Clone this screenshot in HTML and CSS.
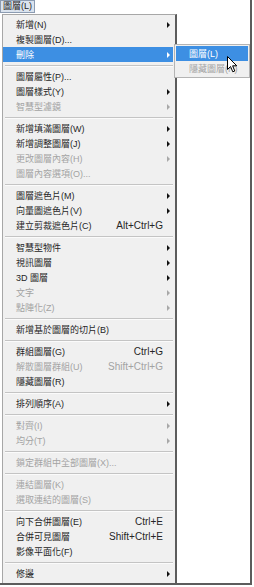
FILE: index.html
```html
<!DOCTYPE html>
<html lang="zh-Hant">
<head>
    <meta charset="UTF-8">
    <meta name="viewport" content="width=device-width, initial-scale=1.0">
    <title>圖層選單</title>
    <link rel="stylesheet" href="styles.css">
</head>
<body>
    <div class="frame">
        <div class="menubar">
            <span class="barItem">圖層(L)</span>
        </div>
        <div class="menu">
            <div class="item sub"><span class="lbl">新增(N)</span><span class="key"></span><span class="arr"></span></div>
            <div class="item"><span class="lbl">複製圖層(D)...</span></div>
            <div class="item sub hot"><span class="lbl">刪除</span><span class="key"></span><span class="arr"></span></div>
            <div class="sep"></div>
            <div class="item"><span class="lbl">圖層屬性(P)...</span></div>
            <div class="item sub"><span class="lbl">圖層樣式(Y)</span><span class="key"></span><span class="arr"></span></div>
            <div class="item sub off"><span class="lbl">智慧型濾鏡</span><span class="key"></span><span class="arr"></span></div>
            <div class="sep"></div>
            <div class="item sub"><span class="lbl">新增填滿圖層(W)</span><span class="key"></span><span class="arr"></span></div>
            <div class="item sub"><span class="lbl">新增調整圖層(J)</span><span class="key"></span><span class="arr"></span></div>
            <div class="item sub off"><span class="lbl">更改圖層內容(H)</span><span class="key"></span><span class="arr"></span></div>
            <div class="item off"><span class="lbl">圖層內容選項(O)...</span></div>
            <div class="sep"></div>
            <div class="item sub"><span class="lbl">圖層遮色片(M)</span><span class="key"></span><span class="arr"></span></div>
            <div class="item sub"><span class="lbl">向量圖遮色片(V)</span><span class="key"></span><span class="arr"></span></div>
            <div class="item"><span class="lbl">建立剪裁遮色片(C)</span><span class="key">Alt+Ctrl+G</span></div>
            <div class="sep"></div>
            <div class="item sub"><span class="lbl">智慧型物件</span><span class="key"></span><span class="arr"></span></div>
            <div class="item sub"><span class="lbl">視訊圖層</span><span class="key"></span><span class="arr"></span></div>
            <div class="item sub"><span class="lbl">3D 圖層</span><span class="key"></span><span class="arr"></span></div>
            <div class="item sub off"><span class="lbl">文字</span><span class="key"></span><span class="arr"></span></div>
            <div class="item sub off"><span class="lbl">點陣化(Z)</span><span class="key"></span><span class="arr"></span></div>
            <div class="sep"></div>
            <div class="item"><span class="lbl">新增基於圖層的切片(B)</span></div>
            <div class="sep"></div>
            <div class="item"><span class="lbl">群組圖層(G)</span><span class="key">Ctrl+G</span></div>
            <div class="item off"><span class="lbl">解散圖層群組(U)</span><span class="key">Shift+Ctrl+G</span></div>
            <div class="item"><span class="lbl">隱藏圖層(R)</span></div>
            <div class="sep"></div>
            <div class="item sub"><span class="lbl">排列順序(A)</span><span class="key"></span><span class="arr"></span></div>
            <div class="sep"></div>
            <div class="item sub off"><span class="lbl">對齊(I)</span><span class="key"></span><span class="arr"></span></div>
            <div class="item sub off"><span class="lbl">均分(T)</span><span class="key"></span><span class="arr"></span></div>
            <div class="sep"></div>
            <div class="item off"><span class="lbl">鎖定群組中全部圖層(X)...</span></div>
            <div class="sep"></div>
            <div class="item off"><span class="lbl">連結圖層(K)</span></div>
            <div class="item off"><span class="lbl">選取連結的圖層(S)</span></div>
            <div class="sep"></div>
            <div class="item"><span class="lbl">向下合併圖層(E)</span><span class="key">Ctrl+E</span></div>
            <div class="item"><span class="lbl">合併可見圖層</span><span class="key">Shift+Ctrl+E</span></div>
            <div class="item"><span class="lbl">影像平面化(F)</span></div>
            <div class="sep"></div>
            <div class="item sub"><span class="lbl">修邊</span><span class="key"></span><span class="arr"></span></div>
        </div>

        <div class="submenu">
            <div class="item hot"><span class="lbl">圖層(L)</span></div>
            <div class="item off"><span class="lbl">隱藏圖層(H)</span></div>
        </div>

        <svg class="cursor" width="11" height="17" viewBox="0 0 11 17">
            <path d="M0.5 0.5 L0.5 13.5 L3.5 10.5 L5.8 15.8 L7.8 15 L5.6 9.8 L9.8 9.8 Z" fill="#fff" stroke="#000" stroke-width="1"/>
        </svg>
    </div>
</body>
</html>
```

FILE: styles.css
```css
* {
    margin: 0;
    padding: 0;
    box-sizing: border-box;
}
body {
    background: #fff;
    font-family: "Liberation Sans", "Noto Sans CJK TC", sans-serif;
    font-size: 9px;
    color: #262626;
}
.frame {
    position: relative;
    width: 252px;
    height: 585px;
    border-right: 2px solid #5c5c5c;
    border-bottom: 2px solid #5c5c5c;
    background: #fff;
}
.menubar {
    height: 14px;
}
.barItem {
    display: inline-block;
    height: 13px;
    line-height: 11px;
    padding: 0 2px;
    border: 1px solid #8c9cb2;
    background: #dae3ee;
}
.menu {
    width: 175px;
    margin-left: 2px;
    border: 1px solid #a7a7a7;
    border-right: 2px solid #5c5c5c;
    border-bottom: none;
    padding: 2px 2px 2px 0;
    background: #f0f0f0;
}
.item {
    display: flex;
    align-items: center;
    height: 15px;
    padding-left: 13px;
}
.lbl {
    flex: 1;
    white-space: nowrap;
}
.key {
    white-space: nowrap;
    font-size: 10px;
}
.arr {
    width: 10px;
    height: 6px;
    position: relative;
}
.arr::after {
    content: "";
    position: absolute;
    left: 4px;
    top: 0;
    border-left: 3px solid #111;
    border-top: 3px solid transparent;
    border-bottom: 3px solid transparent;
}
.item:not(.sub) .key {
    margin-right: 10px;
}
.off {
    color: #a3a3a3;
}
.off .arr::after {
    border-left-color: #a8a8a8;
}
.hot {
    background: #3d8fe3;
    color: #fff;
}
.hot .arr::after {
    border-left-color: #fff;
}
.sep {
    height: 7px;
    padding-top: 3px;
    margin-left: 2px;
}
.sep::before {
    content: "";
    display: block;
    border-top: 1px solid #c4c4c4;
    border-bottom: 1px solid #fbfbfb;
}
.submenu {
    position: absolute;
    left: 174px;
    top: 44px;
    width: 76px;
    border: 1px solid #b4b4b4;
    padding: 1px;
    background: #f0f0f0;
}
.submenu .item {
    padding-left: 13px;
}
.cursor {
    position: absolute;
    left: 227px;
    top: 56px;
}
```
